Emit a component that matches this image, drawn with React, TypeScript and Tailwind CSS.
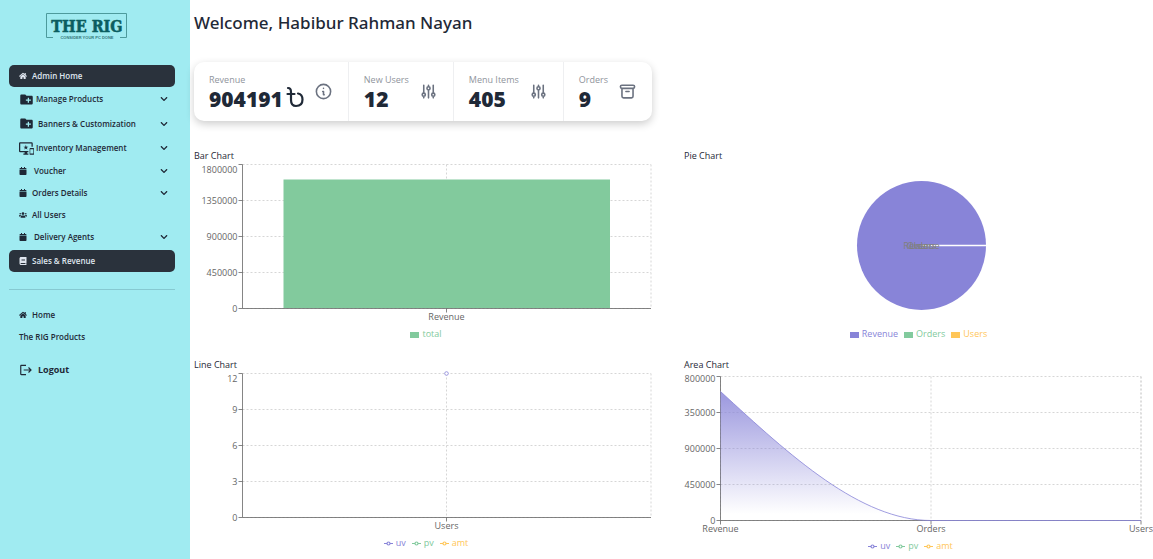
import type { ReactNode } from "react";
import { FaBook, FaCalendar, FaChevronDown, FaHome, FaUsers } from "react-icons/fa";
import { MdCreateNewFolder, MdLogout, MdOutlineImportantDevices } from "react-icons/md";

const PURPLE = "#8884d8";
const GREEN = "#82ca9d";
const AMBER = "#ffc658";

function Logo() {
  return (
    <svg viewBox="0 0 84 28" className="h-7 w-[84px]" role="img" aria-label="The Rig">
      <path d="M8 25.500H1.500V1.500H81.500V25.500H75" fill="none" stroke="#4d9a9c" strokeWidth="1" />
      <text x="42" y="20" textAnchor="middle" fontFamily="'DejaVu Serif Condensed', 'DejaVu Serif', serif" fontWeight="700" fontSize="16" fill="#0b5d60" stroke="#0b5d60" strokeWidth="0.5">
        THE RIG
      </text>
      <text x="42" y="26.500" textAnchor="middle" fontFamily="'Liberation Sans', sans-serif" fontWeight="700" fontSize="4" fill="#35787b">
        CONSIDER YOUR PC DONE
      </text>
    </svg>
  );
}

function MenuGroup({ icon, label, height, gap }: { icon: ReactNode; label: string; height: string; gap: string }) {
  return (
    <li>
      <button type="button" className={`flex w-full items-center pr-[7px] pl-[10px] text-left ${height} ${gap}`}>
        {icon}
        <span className="grow">{label}</span>
        <FaChevronDown className="size-2" />
      </button>
    </li>
  );
}

function MenuLink({ icon, label, active }: { icon?: ReactNode; label: string; active?: boolean }) {
  return (
    <li>
      <a
        href="#"
        className={`flex h-[22px] items-center gap-[5px] rounded-[5px] px-[10px] ${active ? "bg-[#2a323c] text-[#dfe5ee]" : ""}`}
      >
        {icon}
        {label}
      </a>
    </li>
  );
}

function Sidebar() {
  const small = "size-2";
  return (
    <aside className="min-h-screen w-[190px] shrink-0 bg-[#a0ebf1] pt-3 pr-[15px] pl-[9px] text-[8px] font-semibold text-[#1f2937]">
      <div className="mb-[25px] flex justify-center pr-[11px]">
        <Logo />
      </div>
      <nav>
        <ul>
          <MenuLink icon={<FaHome className={small} />} label="Admin Home" active />
          <MenuGroup icon={<MdCreateNewFolder className="size-[15px]" />} label="Manage Products" height="h-6" gap="gap-[2px]" />
          <MenuGroup icon={<MdCreateNewFolder className="size-[15px]" />} label="Banners &amp; Customization" height="h-[25px]" gap="gap-[4px]" />
          <MenuGroup icon={<MdOutlineImportantDevices className="size-[15px]" />} label="Inventory Management" height="h-6" gap="gap-[2px]" />
          <MenuGroup icon={<FaCalendar className={small} />} label="Voucher" height="h-[22px]" gap="gap-[7px]" />
          <MenuGroup icon={<FaCalendar className={small} />} label="Orders Details" height="h-[22px]" gap="gap-[5px]" />
          <MenuLink icon={<FaUsers className={small} />} label="All Users" />
          <MenuGroup icon={<FaCalendar className={small} />} label="Delivery Agents" height="h-[22px]" gap="gap-[7px]" />
          <li className="h-[2px]" aria-hidden="true" />
          <MenuLink icon={<FaBook className={small} />} label="Sales &amp; Revenue" active />
        </ul>
        <hr className="mt-[17px] mb-[14px] border-[#86c9d1]" />
        <ul>
          <MenuLink icon={<FaHome className={small} />} label="Home" />
          <MenuLink label="The RIG Products" />
        </ul>
        <button type="button" className="mt-[11px] flex h-[22px] items-center gap-[5px] px-[10px] text-[9px] font-bold">
          <MdLogout className="size-[14px]" />
          Logout
        </button>
      </nav>
    </aside>
  );
}

function StatIcon({ d }: { d: string }) {
  return (
    <svg viewBox="0 0 24 24" fill="none" stroke="#6b7280" strokeWidth="2" strokeLinecap="round" strokeLinejoin="round" className="size-[19px]">
      <path d={d} />
    </svg>
  );
}

function TakaIcon() {
  return (
    <svg viewBox="0 0 18 24" fill="none" stroke="#1f2937" strokeWidth="2.200" strokeLinecap="round" className="mb-1 ml-[3px] h-6 w-[18px]">
      <path d="M2 3C4.500 3 5 4.500 5 7V15C5 19 7 21 10 21C14 21 16.500 18.500 16.500 14.500C16.500 11 14.500 9 12 8.500M1.500 9H8.500" />
    </svg>
  );
}

const INFO = "M13 16h-1v-4h-1m1-4h.01M21 12a9 9 0 11-18 0 9 9 0 0118 0z";
const SLIDERS =
  "M12 6V4m0 2a2 2 0 100 4m0-4a2 2 0 110 4m-6 8a2 2 0 100-4m0 4a2 2 0 110-4m0 4v2m0-6V4m6 6v10m6-2a2 2 0 100-4m0 4a2 2 0 110-4m0 4v2m0-6V4";
const ARCHIVE = "M5 8h14M5 8a2 2 0 110-4h14a2 2 0 110 4M5 8v10a2 2 0 002 2h10a2 2 0 002-2V8m-9 4h4";

function Stat({ label, value, icon }: { label: string; value: ReactNode; icon: string }) {
  return (
    <div className="flex items-center gap-[10px] px-[15px]">
      <div>
        <div className="text-[9px] leading-[14px] text-[#8f949c]">{label}</div>
        <div className="flex h-6 items-center text-[21px] leading-6 font-extrabold text-[#1f2937]">{value}</div>
      </div>
      <StatIcon d={icon} />
    </div>
  );
}

type Tick = { at: number; label: string };

function Axes({ left, right, top, yTicks, xTicks }: { left: number; right: number; top: number; yTicks: string[]; xTicks: Tick[] }) {
  const bottom = top + 144;
  return (
    <g fontSize="9" fill="#666">
      <g stroke="#ccc" strokeDasharray="2 2" strokeWidth="0.8">
        {yTicks.map((t, i) => (
          <line key={t} x1={left} x2={right} y1={bottom - i * 36} y2={bottom - i * 36} />
        ))}
        {xTicks.map((t) => (
          <line key={t.label} x1={t.at} x2={t.at} y1={top} y2={bottom} />
        ))}
        <line x1={right} x2={right} y1={top} y2={bottom} />
      </g>
      <g stroke="#666" strokeWidth="0.8">
        <line x1={left} x2={left} y1={top} y2={bottom} />
        <line x1={left} x2={right} y1={bottom} y2={bottom} />
        {yTicks.map((t, i) => (
          <line key={t} x1={left - 4} x2={left} y1={bottom - i * 36} y2={bottom - i * 36} />
        ))}
        {xTicks.map((t) => (
          <line key={t.label} x1={t.at} x2={t.at} y1={bottom} y2={bottom + 4} />
        ))}
      </g>
      {yTicks.map((t, i) => (
        <text key={t} x={left - 5} y={bottom - i * 36 + (i === 4 ? (top < 4 ? 8 : 5) : 3)} textAnchor="end">
          {t}
        </text>
      ))}
      {xTicks.map((t) => (
        <text key={t.label} x={t.at} y={bottom + 11} textAnchor="middle">
          {t.label}
        </text>
      ))}
    </g>
  );
}

function Legend({ items, line, pad = "" }: { items: [string, string][]; line?: boolean; pad?: string }) {
  return (
    <ul className={`flex justify-center gap-[6px] text-[9px] leading-[14px] ${pad}`}>
      {items.map(([label, color]) => (
        <li key={label} className="flex items-center gap-[3px]" style={{ color }}>
          {line ? (
            <svg viewBox="0 0 9 9" className="size-[9px]" fill="none" stroke="currentColor" strokeWidth="1.200">
              <path d="M0 4.500H3M6 4.500H9" />
              <circle cx="4.500" cy="4.500" r="1.500" />
            </svg>
          ) : (
            <svg viewBox="0 0 9 9" className="size-[9px]">
              <rect y="2" width="9" height="6" fill="currentColor" />
            </svg>
          )}
          {label}
        </li>
      ))}
    </ul>
  );
}

function Panel({ title, children }: { title: string; children: ReactNode }) {
  return (
    <section>
      <h2 className="text-[9px] leading-[14px] text-[#1f2937]">{title}</h2>
      {children}
    </section>
  );
}

const SERIES: [string, string][] = [
  ["uv", PURPLE],
  ["pv", GREEN],
  ["amt", AMBER],
];
const TOTALS = ["0", "450000", "900000", "1350000", "1800000"];
const AREA_TICKS = ["0", "450000", "900000", "350000", "800000"];

export default function App() {
  return (
    <div className="flex min-h-screen bg-white font-['Open_Sans','Noto_Sans',sans-serif]">
      <Sidebar />
      <main className="min-w-0 grow pl-1">
        <h1 className="pt-[11px] font-['Noto_Sans','Open_Sans',sans-serif] text-[17px] leading-6 font-medium text-[#1f2937]">
          Welcome, Habibur Rahman Nayan
        </h1>
        <div className="mt-[27px] inline-flex h-[59px] divide-x divide-[#eeeff1] rounded-[10px] bg-white shadow-[0_3px_8px_rgba(0,0,0,0.2)]">
          <Stat
            label="Revenue"
            value={
              <>
                904191
                <TakaIcon />
              </>
            }
            icon={INFO}
          />
          <Stat label="New Users" value="12" icon={SLIDERS} />
          <Stat label="Menu Items" value="405" icon={SLIDERS} />
          <Stat label="Orders" value="9" icon={ARCHIVE} />
        </div>

        <div className="mt-[28px] grid grid-cols-[458fr_469fr] gap-x-8 gap-y-[17px]">
          <Panel title="Bar Chart">
            <svg viewBox="0 0 458 164" className="w-full">
              <Axes left={48.5} right={457} top={1.5} yTicks={TOTALS} xTicks={[{ at: 252.5, label: "Revenue" }]} />
              <rect x="89.500" y="16.500" width="326.500" height="128.500" fill={GREEN} />
            </svg>
            <Legend items={[["total", GREEN]]} pad="pl-[6px]" />
          </Panel>
          <Panel title="Pie Chart">
            <svg viewBox="0 0 469 164" className="w-full">
              <circle cx="237.500" cy="82.500" r="64.500" fill={PURPLE} />
              <path d="M237.500 82.500H302.500" stroke="#fff" strokeWidth="1.500" />
              <g fontSize="9" fill="#808080" textAnchor="middle">
                <text x="237.500" y="86">Revenue</text>
                <text x="237.500" y="86">Orders</text>
                <text x="237.500" y="86">Users</text>
              </g>
            </svg>
            <Legend items={[["Revenue", PURPLE], ["Orders", GREEN], ["Users", AMBER]]} />
          </Panel>
          <Panel title="Line Chart">
            <svg viewBox="0 0 458 164" className="w-full overflow-visible">
              <Axes left={48.5} right={457} top={1.5} yTicks={["0", "3", "6", "9", "12"]} xTicks={[{ at: 252.5, label: "Users" }]} />
              <circle cx="252.500" cy="1.500" r="1.800" fill="#fff" stroke={PURPLE} strokeWidth="0.8" />
            </svg>
            <Legend items={SERIES} line pad="pl-[6px]" />
          </Panel>
          <Panel title="Area Chart">
            <svg viewBox="0 0 469 167" className="w-full">
              <defs>
                <linearGradient id="area" x1="0" y1="0" x2="0" y2="1">
                  <stop offset="5%" stopColor={PURPLE} stopOpacity="0.8" />
                  <stop offset="95%" stopColor={PURPLE} stopOpacity="0" />
                </linearGradient>
              </defs>
              <Axes
                left={36.5}
                right={457}
                top={4.5}
                yTicks={AREA_TICKS}
                xTicks={[
                  { at: 36.5, label: "Revenue" },
                  { at: 247, label: "Orders" },
                  { at: 457, label: "Users" },
                ]}
              />
              <path d="M36.500 19.500C106.500 84 176.500 148.500 247 148.500H457H36.500Z" fill="url(#area)" />
              <path d="M36.500 19.500C106.500 84 176.500 148.500 247 148.500H457" fill="none" stroke={PURPLE} strokeWidth="0.8" />
            </svg>
            <Legend items={SERIES} line pad="pr-4" />
          </Panel>
        </div>
      </main>
    </div>
  );
}
